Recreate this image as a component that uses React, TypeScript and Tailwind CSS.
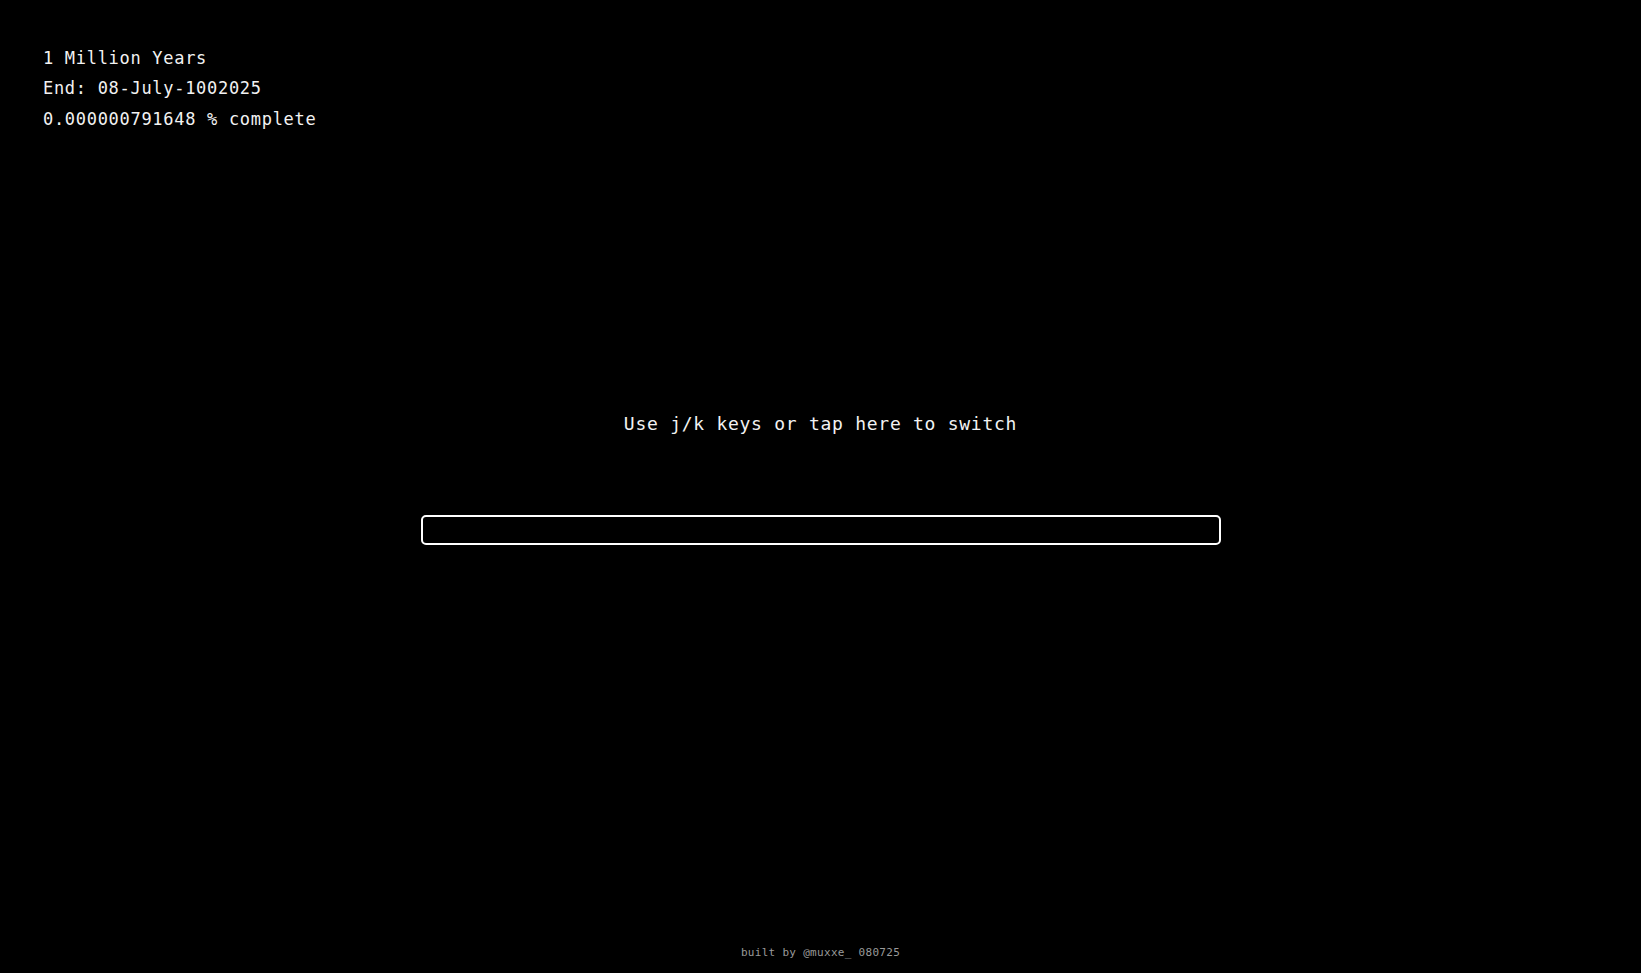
import React from "react";

export default function App() {
  const mono = { fontFamily: '"DejaVu Sans Mono", "Liberation Mono", monospace' };
  return (
    <div className="h-screen w-full bg-black text-white flex flex-col overflow-hidden" style={mono}>
      <div className="pt-[43px] pl-[43px] text-[17px] leading-[30.4px] tracking-[0.7px] text-[#f2f2f2]">
        <div>1 Million Years</div>
        <div>End: 08-July-1002025</div>
        <div>0.000000791648 % complete</div>
      </div>
      <div className="mt-[276px] flex flex-col items-center">
        <div className="text-[18px] leading-[28px] tracking-[0.73px] text-[#f2f2f2] cursor-pointer select-none">
          Use j/k keys or tap here to switch
        </div>
        <div className="mt-[77px] w-[800px] h-[30px] border-2 border-white rounded-[5px] bg-black" />
      </div>
      <div className="flex-1" />
      <div className="pb-[12px] text-center text-[11px] leading-[16px] tracking-[0.3px] text-[#9a9a9a]">
        built by @muxxe_ 080725
      </div>
    </div>
  );
}
